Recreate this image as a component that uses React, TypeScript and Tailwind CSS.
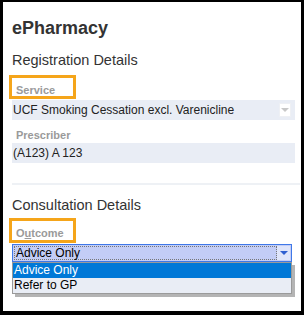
export default function App() {
  return (
    <div className="w-[304px] h-[315px] bg-white border-black border-l-[3px] border-t-[2px] border-r-[3px] border-b-[4px] pl-[9px] pr-[6px] pt-[15px] font-['Liberation_Sans',Arial,sans-serif] overflow-hidden">
      <h1 className="text-[18px] leading-[22px] font-bold text-[#333]">ePharmacy</h1>

      <h2 className="mt-[12px] text-[14.5px] leading-[18px] text-[#333]">Registration Details</h2>

      {/* Service */}
      <div className="relative mt-[14px] h-[14px] pl-[4px] text-[11px] leading-[14px] font-bold text-[#9a9a9a]">
        Service
        <div className="absolute -top-[8px] -left-[3px] w-[67px] h-[24px] border-[3px] border-[#f5a51a]" />
      </div>
      <div className="mt-[3px] h-[20px] bg-[#e9edf5] flex items-center pl-[1px] pr-[4px]">
        <span className="flex-1 text-[12px] text-[#222] whitespace-nowrap">
          UCF Smoking Cessation excl. Varenicline
        </span>
        <div className="w-[12px] h-[14px] bg-white border border-[#eef0f4] flex items-center justify-center">
          <div className="w-0 h-0 border-l-[4px] border-r-[4px] border-t-[4px] border-l-transparent border-r-transparent border-t-[#c8c8c8]" />
        </div>
      </div>

      {/* Prescriber */}
      <div className="mt-[8px] h-[14px] pl-[4px] text-[11px] leading-[14px] font-bold text-[#9a9a9a]">
        Prescriber
      </div>
      <div className="mt-[1px] h-[20px] bg-[#e9edf5] flex items-center pl-[1px] text-[12px] text-[#222]">
        (A123) A 123
      </div>

      <div className="mt-[20px] h-[2px] bg-[#eef1f5] -mr-[5px]" />

      <h2 className="mt-[11px] text-[14.5px] leading-[18px] text-[#333]">Consultation Details</h2>

      {/* Outcome */}
      <div className="relative mt-[12px] h-[14px] pl-[4px] text-[11px] leading-[14px] font-bold text-[#9a9a9a]">
        O<span className="underline">u</span>tcome
        <div className="absolute -top-[8px] -left-[3px] w-[67px] h-[25px] border-[3px] border-[#f5a51a]" />
      </div>
      <div className="mt-[4px] w-[280px] h-[18px] border border-[#3f78e8] bg-[#c3cdf6] flex p-[1px]">
        <div className="flex-1 border border-dotted border-[#777] flex items-center pl-[1px] text-[12px] leading-none text-black">
          Advice Only
        </div>
        <div className="w-[13px] flex items-center justify-center bg-[#dfe5fa]">
          <div className="w-0 h-0 border-l-[4px] border-r-[4px] border-t-[4px] border-l-transparent border-r-transparent border-t-[#2f5fd0]" />
        </div>
      </div>
      <div className="w-[280px] border border-[#9a9a9a] shadow-[3px_3px_0_#b4b4b4] text-[12px] leading-[15px]">
        <div className="h-[15px] bg-[#0078d7] text-white pl-[1px]">Advice Only</div>
        <div className="h-[15px] bg-[#e9edf5] text-black pl-[1px]">Refer to GP</div>
      </div>
    </div>
  );
}
